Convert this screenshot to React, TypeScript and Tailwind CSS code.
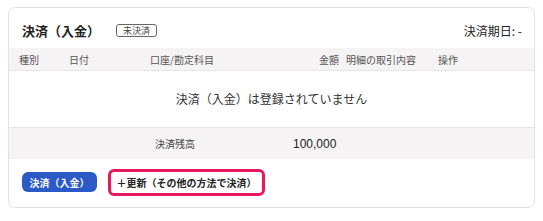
export default function App() {
  const font = { fontFamily: "'Noto Sans CJK JP', 'Noto Sans', sans-serif" };

  return (
    <div className="w-[543px] h-[221px] bg-white pl-[8px] pt-[7px]" style={font}>
      <div className="w-[527px] h-[201px] border border-[#e2e2e2] rounded-[7px] bg-white flex flex-col overflow-hidden">
        {/* タイトル */}
        <div className="h-[40px] flex items-center pt-[5px] pl-[13px] pr-[12px]">
          <span className="text-[13px] font-bold text-[#222]">決済（入金）</span>
          <span className="ml-[16px] h-[13px] w-[41px] flex items-center justify-center border border-[#666] rounded-[3px] text-[9px] text-[#444] leading-none">
            未決済
          </span>
          <span className="ml-auto text-[12px] text-[#222]">決済期日: -</span>
        </div>

        {/* ヘッダー */}
        <div className="h-[22px] bg-[#f5f3f4] flex items-center pl-[10px] text-[10px] text-[#555]">
          <span className="w-[50px]">種別</span>
          <span className="w-[81px]">日付</span>
          <span className="w-[150px]">口座/勘定科目</span>
          <span className="w-[39px] text-right">金額</span>
          <span className="w-[92px] ml-[7px]">明細の取引内容</span>
          <span>操作</span>
        </div>

        {/* 空の行 */}
        <div className="h-[58px] border-t border-b border-[#e6e6e6] flex items-center justify-center text-[12px] text-[#333]">
          決済（入金）は登録されていません
        </div>

        {/* 残高 */}
        <div className="h-[31px] bg-[#f5f3f4] flex items-center">
          <span className="ml-[146px] w-[138px] text-[10px] text-[#444]">決済残高</span>
          <span className="text-[12px] text-[#222]" style={{ fontFamily: "'Liberation Sans', Arial, sans-serif" }}>100,000</span>
        </div>

        {/* ボタン */}
        <div className="flex-1 flex items-center pl-[13px] pb-[2px]">
          <button className="h-[20px] w-[75px] rounded-[6px] bg-[#2b5ac6] text-white text-[10px] font-bold flex items-center justify-center">
            決済（入金）
          </button>
          <div className="ml-[11px] h-[27px] w-[157px] border-[3px] border-[#e8185e] rounded-[6px] flex items-center justify-center bg-white">
            <span className="text-[10px] font-bold text-[#222]">＋更新（その他の方法で決済）</span>
          </div>
        </div>
      </div>
    </div>
  );
}
